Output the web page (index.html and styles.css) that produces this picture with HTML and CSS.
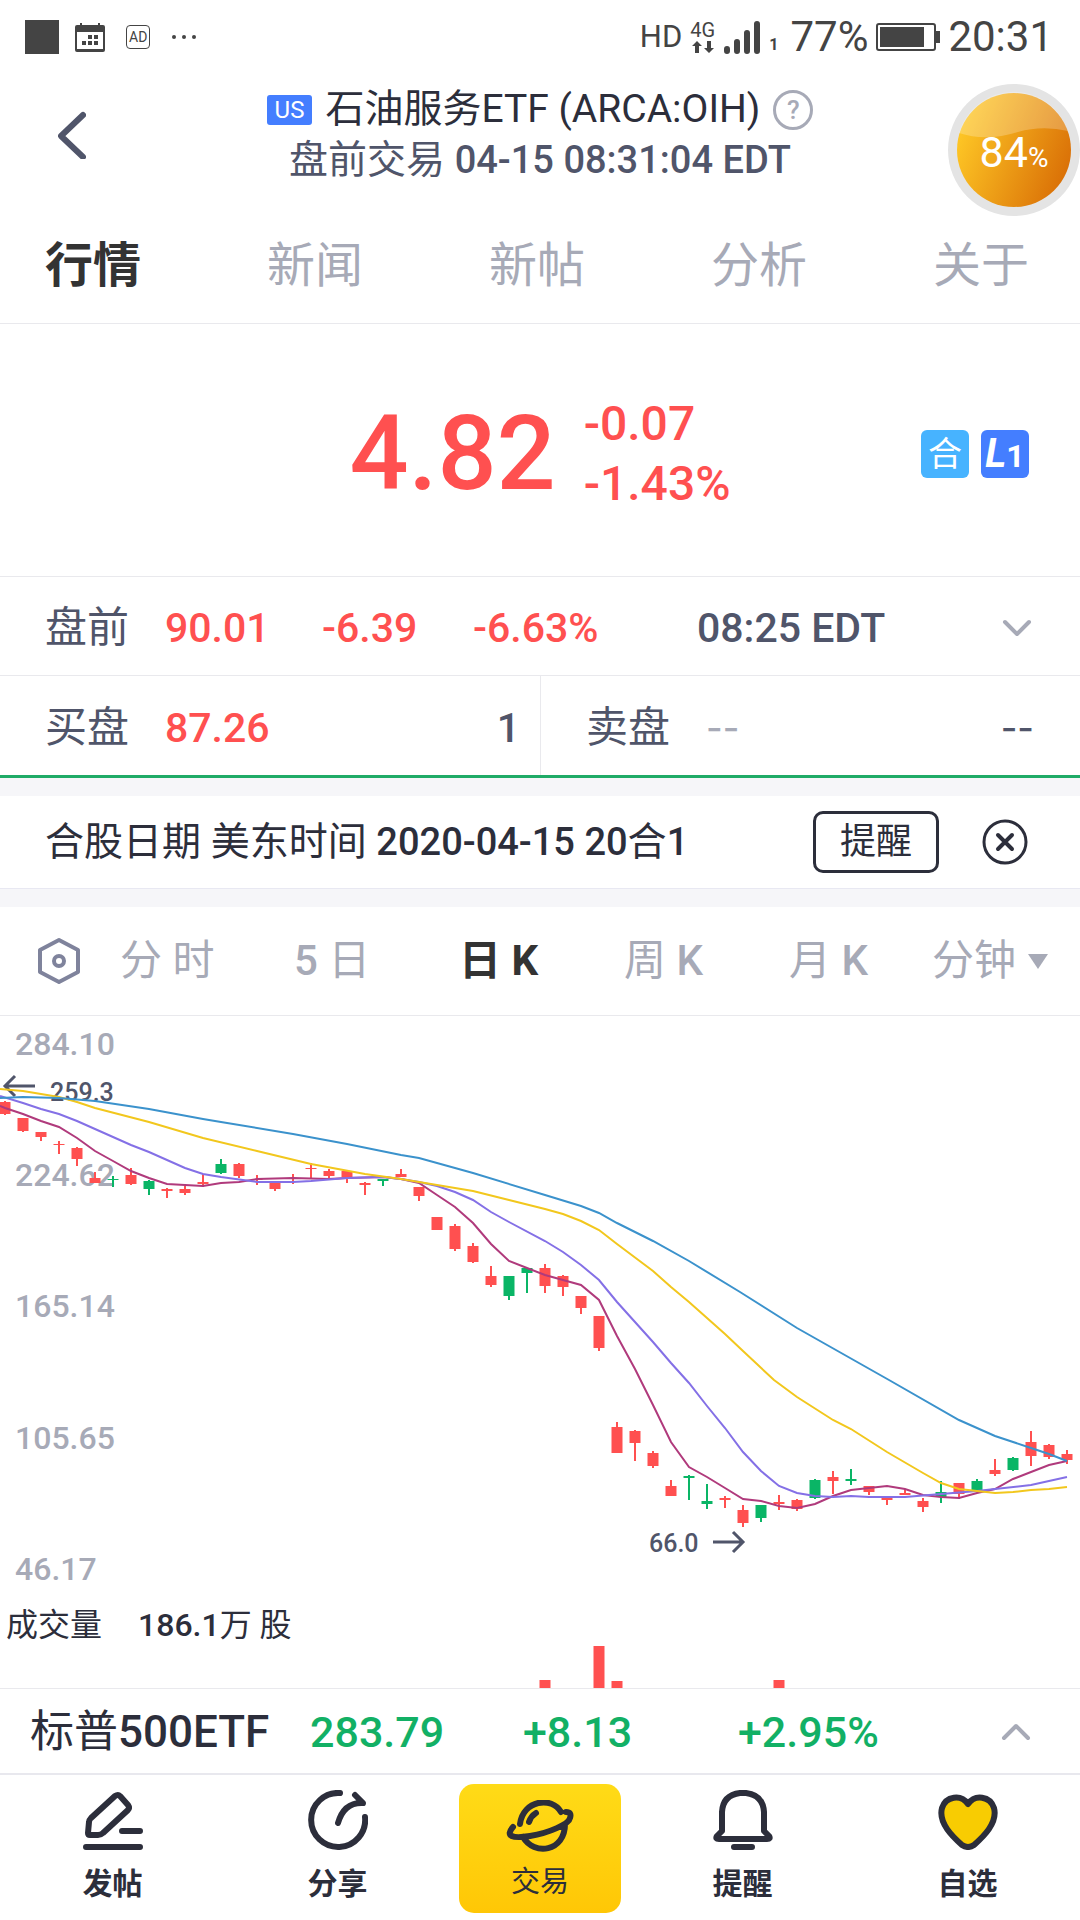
FILE: index.html
```html
<!DOCTYPE html>
<html lang="zh-CN">
  <head>
    <meta charset="UTF-8" />
    <meta name="viewport" content="width=device-width, initial-scale=1.0" />
    <title>石油服务ETF (ARCA:OIH)</title>
    <link rel="stylesheet" href="styles.css">
  </head>
  <body>
    <div class="status-bar">
      <div class="status-left">
        <span class="status-square"></span>
        <svg class="calendar" width="30" height="29" viewBox="0 0 30 29">
          <path d="M0 4q0-2 2-2h3V0h2v2h16V0h2v2h3q2 0 2 2v23q0 2-2 2H2q-2 0-2-2zM2 9v17h26V9z" fill="#444" fill-rule="evenodd" />
          <path d="M13 12h4v4h-4zM19 12h4v4h-4zM7 18h4v4H7zM13 18h4v4h-4zM19 18h4v4h-4z" fill="#444" />
        </svg>
        <span class="ad">AD</span>
        <svg width="26" height="6" viewBox="0 0 26 6" fill="#444">
          <circle cx="3" cy="3" r="2" />
          <circle cx="13" cy="3" r="2" />
          <circle cx="23" cy="3" r="2" />
        </svg>
      </div>
      <div class="status-right">
        <span class="hd">HD</span>
        <span class="network">
          4G
          <svg width="22" height="12" viewBox="0 0 22 12" fill="#444">
            <path d="M5 0l5 5H7v7H3V5H0zM17 12l-5-5h3V0h4v7h3z" />
          </svg>
        </span>
        <svg class="signal" width="37" height="33" viewBox="0 0 37 33" stroke="#444" stroke-width="6" stroke-linecap="round">
          <path d="M3 28v2M13 21v9M23 12v18M33 3v27" />
        </svg>
        <span class="sim">1</span>
        <span>77%</span>
        <svg class="battery" width="64" height="28" viewBox="0 0 64 28">
          <rect x="1" y="1" width="58" height="26" rx="2" fill="none" stroke="#444" stroke-width="2" />
          <path d="M4 4h44v20H4zM60 8h4v12h-4z" fill="#444" />
        </svg>
        <span>20:31</span>
      </div>
    </div>

    <header class="header">
      <button class="icon-button" type="button" aria-label="返回">
        <svg width="28" height="48" viewBox="0 0 28 48" fill="none" stroke="#50556a" stroke-width="6" stroke-linecap="round" stroke-linejoin="round">
          <path d="M25 4L3 25l22 21" />
        </svg>
      </button>
      <div class="header-title">
        <h1>
          <span class="market">US</span>
          石油服务ETF (ARCA:OIH)
          <button class="icon-button" type="button" aria-label="帮助"><span class="help">?</span></button>
        </h1>
        <p>盘前交易 <b>04-15 08:31:04 EDT</b></p>
      </div>
    </header>
    <div class="ball">
      <svg class="ball-fill" viewBox="0 0 132 132">
        <defs>
          <linearGradient id="ballBase" x1="0" y1="0.3" x2="1" y2="0.7">
            <stop offset="0" stop-color="#ffc926" />
            <stop offset="1" stop-color="#d96e06" />
          </linearGradient>
        </defs>
        <circle cx="66" cy="66" r="66" fill="#e4e4e4" />
        <circle cx="66" cy="66" r="57" fill="url(#ballBase)" />
        <path d="M11 49A57 57 0 0 1 120 47Q94 41 70 48Q38 58 11 49z" fill="#fff" opacity="0.23" />
      </svg>
      <span class="ball-text">84<small>%</small></span>
    </div>

    <nav class="page-tabs">
      <a class="active" href="#quote">行情</a>
      <a href="#news">新闻</a>
      <a href="#posts">新帖</a>
      <a href="#analysis">分析</a>
      <a href="#about">关于</a>
    </nav>

    <main>
      <section class="price" id="quote">
        <div class="price-now">4.82</div>
        <div class="price-change">
          <div>-0.07</div>
          <div>-1.43%</div>
        </div>
        <div class="price-badges">
          <span class="badge badge-merge">合</span>
          <span class="badge badge-level"><i>L</i><small>1</small></span>
        </div>
      </section>

      <section class="pre-market">
        <span class="label">盘前</span>
        <span class="down">90.01</span>
        <span class="down">-6.39</span>
        <span class="down">-6.63%</span>
        <span>08:25 EDT</span>
        <button class="icon-button" type="button" aria-label="展开">
          <svg width="30" height="18" viewBox="0 0 30 18" fill="none" stroke="#a7aab7" stroke-width="4" stroke-linecap="round" stroke-linejoin="round">
            <path d="M3 3l12 12L27 3" />
          </svg>
        </button>
      </section>

      <section class="order-book">
        <div class="order">
          <span class="label">买盘</span>
          <span class="down">87.26</span>
          <span class="count">1</span>
        </div>
        <div class="order">
          <span class="label">卖盘</span>
          <span class="dash empty">--</span>
          <span class="count dash">--</span>
        </div>
      </section>

      <section class="notice">
        <p>合股日期 美东时间 <b>2020-04-15 20</b>合<b>1</b></p>
        <button class="remind" type="button">提醒</button>
        <button class="icon-button" type="button" aria-label="关闭">
          <svg width="46" height="46" viewBox="0 0 46 46" fill="none" stroke="#2c2e3b" stroke-linecap="round">
            <circle cx="23" cy="23" r="21" stroke-width="3" />
            <path d="M16 16l14 14M30 16L16 30" stroke-width="4" />
          </svg>
        </button>
      </section>

      <section class="chart-card">
        <div class="period-tabs">
          <button class="icon-button" type="button" aria-label="设置">
            <svg width="44" height="48" viewBox="0 0 44 48" fill="none" stroke="#7f839c" stroke-width="4" stroke-linejoin="round">
              <path d="M22 3L41 13v22L22 45L3 35V13z" />
              <circle cx="22" cy="24" r="5" />
            </svg>
          </button>
          <button type="button">分 时</button>
          <button type="button"><b>5</b> 日</button>
          <button class="active" type="button">日 K</button>
          <button type="button">周 <b>K</b></button>
          <button type="button">月 <b>K</b></button>
          <button type="button">分钟<span class="triangle"></span></button>
        </div>

        <svg class="chart" viewBox="0 0 1080 672">
          <g class="axis">
            <text x="15" y="39">284.10</text>
            <text x="15" y="170">224.62</text>
            <text x="15" y="301">165.14</text>
            <text x="15" y="433">105.65</text>
            <text x="15" y="564">46.17</text>
          </g>

          <!-- high and low markers -->
          <g class="marker">
            <text x="50" y="85">259.3</text>
            <path d="M35 70H6M15 60L5 70l10 10" />
            <text x="649" y="536">66.0</text>
            <path d="M713 526h29M733 516l10 10-10 10" />
          </g>

          <!-- candles: wicks, then bodies -->
          <path class="wick red" d="M5 85v14M23 102v14M41 116v9M59 125v13M77 131v19M95 156v11M131 152v17M167 172v10M185 170v9M203 158v13M239 147v15M257 159v10M275 167v8M293 158v10M311 147v15M329 153v10M347 154v13M365 166v13M401 153v8M419 171v14M455 208v27M473 227v20M491 250v21M545 248v29M563 259v21M581 280v18M599 300v35M617 406v31M635 414v31M653 435v17M671 464v16M725 480v12M743 489v22M779 479v15M797 483v12M833 455v23M869 470v9M887 481v8M905 473v6M923 482v14M959 467v16M995 443v17M1031 415v35M1049 428v15M1067 434v14" />
          <path class="wick green" d="M113 160v11M149 164v15M221 143v15M383 163v7M509 260v24M527 252v25M689 459v25M707 468v25M761 489v17M815 463v20M851 453v16M941 465v22M977 463v11M1013 441v14" />
          <path class="candle red" d="M5 86v12M23 102v13M41 116v5M59 128v1M77 132v11M95 162v5M131 159v9M167 173v2M185 173v4M203 166v2M239 148v12M257 163v1M275 167v6M293 162v1M311 152v1M329 155v5M347 155v6M365 167v2M401 158v3M419 171v9M437 201v13M455 210v23M473 230v16M491 260v9M545 252v18M563 260v11M581 280v12M599 300v32M617 411v26M635 415v12M653 437v13M671 470v10M725 482v2M743 494v13M779 486v2M797 484v9M833 461v4M869 470v6M887 482v2M905 477v2M923 485v6M959 467v11M995 454v4M1031 426v14M1049 429v12M1067 438v6" />
          <path class="candle green" d="M113 163v1M149 165v8M221 148v9M383 163v2M509 260v20M527 252v5M689 460v2M707 485v3M761 489v13M815 464v18M851 463v2M941 476v5M977 465v9M1013 442v12" />

          <!-- moving averages -->
          <polyline class="line ma5" points="0,90 5,92 23,98 41,105 59,111 77,122 95,135 113,145 131,155 149,162 167,168 185,169 203,170 221,167 239,166 257,163 293,162 329,163 347,162 383,161 401,163 419,167 437,179 455,191 473,207 491,228 509,245 527,252 545,259 563,264 581,269 599,284 617,320 635,353 653,389 671,426 689,451 707,461 725,472 743,483 761,485 779,490 797,492 815,488 833,480 851,474 869,472 887,470 905,473 923,479 941,481 959,482 977,477 995,473 1013,463 1031,456 1049,449 1067,445" />
          <polyline class="line ma10" points="0,80 23,87 41,93 59,98 77,105 95,113 131,129 149,136 185,152 203,158 221,161 257,166 293,166 311,165 347,162 383,161 401,163 419,166 437,170 455,176 473,184 491,196 509,206 545,225 563,236 581,249 599,264 617,286 653,326 671,347 689,367 707,390 725,412 743,436 761,455 779,470 797,477 815,480 833,481 851,480 869,481 905,481 941,478 977,475 995,473 1031,469 1067,461" />
          <polyline class="line ma20" points="0,73 23,75 59,81 77,86 95,92 149,106 203,122 257,135 311,148 365,158 401,163 437,169 473,175 509,184 545,193 563,198 581,205 599,214 617,228 653,255 671,271 689,286 725,318 743,335 774,364 797,381 833,404 851,413 887,436 923,457 941,467 959,473 977,475 995,477 1013,476 1031,474 1049,473 1067,471" />
          <polyline class="line ma30" points="0,82 23,81 59,82 95,85 149,93 203,103 221,106 293,118 347,128 401,139 419,142 473,157 545,179 581,190 599,197 617,207 653,225 689,245 740,276 797,312 889,364 959,404 995,420 1031,432 1049,438 1067,445" />

          <!-- volume -->
          <g class="volume">
            <text x="6" y="620">成交量</text>
            <text x="138" y="620"><tspan class="medium">186.1</tspan>万 股</text>
          </g>
          <path class="candle red" d="M545 664v8M599 630v42M617 665v7M779 664v8" />
        </svg>
      </section>
    </main>

    <section class="index-bar">
      <span class="index-name">标普<b>500ETF</b></span>
      <span class="up">283.79</span>
      <span class="up">+8.13</span>
      <span class="up">+2.95%</span>
      <button class="icon-button" type="button" aria-label="收起">
        <svg width="30" height="18" viewBox="0 0 30 18" fill="none" stroke="#a7aab7" stroke-width="4" stroke-linecap="round" stroke-linejoin="round">
          <path d="M3 15L15 3l12 12" />
        </svg>
      </button>
    </section>

    <nav class="bottom-nav">
      <a href="#post">
        <svg width="60" height="60" viewBox="0 0 60 60">
          <path d="M5 43L6 32Q6 30 8 28L32 6Q35 4 37 6L45 15Q47 18 45 20L20 43Q18 45 15 45H7Q5 45 5 43zM39 41H57M3 57H57" />
        </svg>
        发帖
      </a>
      <a href="#share">
        <svg width="60" height="60" viewBox="0 0 60 60">
          <path d="M32 3A27 27 0 1 0 57 27M30 33Q36 12 55 13L47 5" />
        </svg>
        分享
      </a>
      <a class="trade" href="#trade">
        <svg width="68" height="52" viewBox="0 0 68 52">
          <path d="M14 24C17 0 46-4 55 12M23 22Q25 16 30 13M7 27C-1 36 6 39 24 36C43 33 63 24 64 18Q66 12 60 12M17 37C28 56 59 52 59 24" />
        </svg>
        交易
      </a>
      <a href="#alert">
        <svg width="60" height="60" viewBox="0 0 60 60">
          <path d="M27 3H33Q50 5 51 22V41L56 46Q58 49 54 49H6Q2 49 4 46L9 41V22Q10 5 27 3zM21 57H39" />
        </svg>
        提醒
      </a>
      <a href="#watchlist">
        <svg width="60" height="60" viewBox="0 0 60 60">
          <path class="heart" d="M30 14C23 4 8 6 4 18C0 33 15 47 24 55Q30 59 36 55C45 47 60 33 56 18C52 6 37 4 30 14z" />
        </svg>
        自选
      </a>
    </nav>
  </body>
</html>
```

FILE: styles.css
```css
* {
  box-sizing: border-box;
}

body {
  font-family: Roboto, "Noto Sans CJK SC", sans-serif;
  margin: 0;
  position: relative;
  color: #2c2e3b;
  background-color: #fff;
}

h1,
p {
  margin: 0;
  font-weight: 400;
}

b {
  font-weight: 500;
}

svg {
  display: block;
  flex: none;
}

a {
  color: inherit;
  text-decoration: none;
}

button {
  font: inherit;
  color: inherit;
  padding: 0;
  border: none;
  background: none;
  cursor: pointer;
}

.down {
  color: #ff5050;
}

.up {
  color: #12b065;
}

/* Status bar */
.status-bar {
  display: flex;
  justify-content: space-between;
  padding: 17px 27px 15px 25px;
  color: #444;
  font-size: 42px;
  line-height: 40px;
}

.status-left,
.status-right {
  display: flex;
  align-items: center;
}

.status-left {
  gap: 21px;
}

.status-right {
  gap: 8px;
}

.status-square {
  width: 34px;
  height: 34px;
  margin-right: -5px;
  background-color: #444;
}

.ad {
  padding: 0 2px;
  border: 1px solid #444;
  border-radius: 4px;
  font-size: 14px;
  line-height: 22px;
}

.hd {
  font-size: 31px;
}

.network {
  font-size: 20px;
  line-height: 18px;
}

.network svg {
  margin: 2px 2px 0;
}

.sim {
  align-self: flex-end;
  padding-right: 4px;
  font-size: 16px;
  font-weight: 700;
  line-height: 24px;
}

/* Header */
.header {
  display: grid;
  grid-template-columns: 1fr auto 1fr;
  align-items: center;
  padding: 12px 58px 0;
  font-size: 39px;
  line-height: 51px;
}

.icon-button {
  display: flex;
  align-items: center;
}

.header-title h1 {
  display: flex;
  align-items: center;
  gap: 13px;
  font-size: 39px;
}

.header-title p {
  text-align: center;
  color: #50556a;
}

.header-title b,
.notice b {
  font-size: 38px;
}

.market {
  padding: 0 8px;
  border-radius: 3px;
  background-color: #447eff;
  color: #fff;
  font-size: 24px;
  line-height: 30px;
}

.help {
  width: 40px;
  border: 3px solid #a7aab7;
  border-radius: 50%;
  color: #a7aab7;
  font-size: 26px;
  font-weight: 500;
  line-height: 34px;
}

.ball {
  position: absolute;
  top: 84px;
  right: 0;
  width: 132px;
  height: 132px;
}

.ball-text {
  position: absolute;
  inset: 0;
  text-align: center;
  color: #fff;
  font-size: 43px;
  line-height: 136px;
}

.ball-text small {
  font-size: 28px;
}

.page-tabs {
  display: flex;
  justify-content: space-between;
  padding: 48px 51px 25px 45px;
  border-bottom: 1px solid #e9e9ed;
  color: #a7aab7;
  font-size: 48px;
  line-height: 64px;
}

.page-tabs .active {
  color: #333;
  font-weight: 700;
}

/* Price */
.price {
  display: grid;
  grid-template-columns: 1fr auto auto 1fr;
  align-items: center;
  padding: 70px 51px 62px;
  border-bottom: 1px solid #e9e9ed;
  color: #ff5050;
  font-weight: 500;
}

.price-now {
  grid-column: 2;
  font-size: 104px;
  line-height: 120px;
}

.price-change {
  padding-left: 28px;
  font-size: 48px;
  line-height: 60px;
}

.price-badges {
  display: flex;
  justify-content: flex-end;
  gap: 12px;
  color: #fff;
}

.badge {
  display: flex;
  justify-content: center;
  align-items: baseline;
  width: 48px;
  height: 48px;
  border-radius: 6px;
  font-size: 34px;
  font-weight: 400;
  line-height: 48px;
}

.badge-merge {
  background-color: #47b3ff;
}

.badge-level {
  background-color: #447eff;
  font-size: 40px;
  font-weight: 700;
}

.badge-level small {
  font-size: 32px;
}

/* Quote rows */
.pre-market {
  display: grid;
  grid-template-columns: 120fr 157fr 151fr 224fr 305fr auto;
  align-items: center;
  padding: 26px 48px 22px 45px;
  border-bottom: 1px solid #e9e9ed;
  color: #50556a;
  font-size: 41px;
  font-weight: 500;
  line-height: 50px;
}

.label {
  font-size: 42px;
  font-weight: 400;
}

.order-book {
  display: grid;
  grid-template-columns: 1fr 1fr;
  border-bottom: 3px solid #1fab67;
  color: #50556a;
  font-size: 41px;
  font-weight: 500;
  line-height: 50px;
}

.order {
  display: flex;
  gap: 36px;
  padding: 27px 20px 22px 45px;
}

.order + .order {
  padding-right: 46px;
  border-left: 1px solid #e9e9ed;
}

.count {
  margin-left: auto;
}

.dash {
  font-family: Inter, sans-serif;
  font-size: 36px;
}

.empty {
  color: #a7aab7;
}

/* Notice */
.notice {
  display: flex;
  align-items: center;
  padding: 15px 52px 15px 45px;
  border-top: 18px solid #f6f6f9;
  border-bottom: 1px solid #e8e8f2;
  font-size: 39px;
  line-height: 56px;
}

.remind {
  margin-left: auto;
  margin-right: 43px;
  padding: 0 24px;
  border: 3px solid #2c2e3b;
  border-radius: 10px;
  font-size: 36px;
}

/* Chart */
.chart-card {
  border-top: 18px solid #f6f6f9;
}

.period-tabs {
  display: grid;
  grid-template-columns: 83fr 174fr 165fr 165fr 165fr 143fr 116fr;
  align-items: center;
  padding: 24px 32px 24px 37px;
  border-bottom: 1px solid #e9e9ed;
  color: #a7aab7;
  font-size: 42px;
  line-height: 60px;
}

.period-tabs button {
  text-align: left;
  white-space: nowrap;
}

.period-tabs .active {
  color: #333;
  font-weight: 700;
}

.triangle {
  display: inline-block;
  margin-left: 12px;
  border: 10px solid transparent;
  border-top: 15px solid #a7aab7;
  border-bottom: none;
  vertical-align: 6px;
}

.chart {
  width: 100%;
  height: auto;
}

.axis {
  fill: #a7aab7;
  font-size: 32px;
  font-weight: 500;
}

.marker {
  fill: #50556a;
  font-size: 25px;
  font-weight: 500;
}

.marker path {
  fill: none;
  stroke: #50556a;
  stroke-width: 3;
}

.volume {
  fill: #2c2e3b;
  font-size: 32px;
}

.medium {
  font-weight: 500;
}

.wick {
  stroke-width: 2;
}

.candle {
  stroke-width: 11;
}

.red {
  stroke: #ff5050;
}

.green {
  stroke: #0ab566;
}

.line {
  fill: none;
  stroke-width: 2;
}

.ma5 {
  stroke: #b03a7c;
}

.ma10 {
  stroke: #8470e6;
}

.ma20 {
  stroke: #f2c71d;
}

.ma30 {
  stroke: #3b92cc;
}

/* Index bar */
.index-bar {
  display: grid;
  grid-template-columns: 280fr 213fr 215fr 263fr auto;
  align-items: center;
  padding: 18px 49px 16px 30px;
  border-top: 1px solid #e9e9ed;
  border-bottom: 2px solid #e8e8ee;
  font-size: 43px;
  font-weight: 500;
  line-height: 50px;
}

.index-name {
  font-size: 44px;
  font-weight: 400;
}

/* Bottom navigation */
.bottom-nav {
  display: grid;
  grid-template-columns: 5fr 5fr 4fr 5fr 5fr;
  align-items: start;
  padding: 9px 0 7px;
  font-size: 30px;
  font-weight: 700;
  line-height: 40px;
}

.bottom-nav a {
  display: flex;
  flex-direction: column;
  align-items: center;
  gap: 14px;
  padding-top: 6px;
}

.bottom-nav .trade {
  gap: 10px;
  margin: 0 9px;
  padding: 16px 0 11px;
  border-radius: 15px;
  background: linear-gradient(#ffdb17, #ffc706);
  font-size: 29px;
  font-weight: 400;
}

.bottom-nav path {
  fill: none;
  stroke: #2c2e3b;
  stroke-width: 6;
  stroke-linecap: round;
  stroke-linejoin: round;
}

.bottom-nav .heart {
  fill: #f8cc02;
}
```
